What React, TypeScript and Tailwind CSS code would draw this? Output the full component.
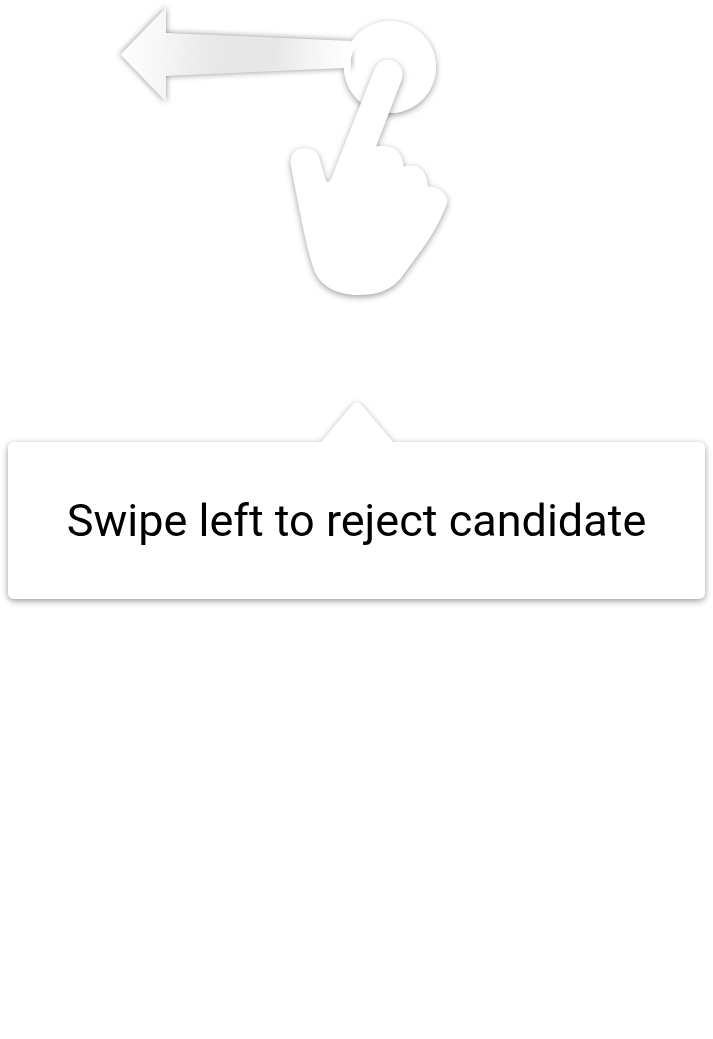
function SwipeGesture() {
  return (
    <svg viewBox="0 0 713 320" className="block w-full max-w-3xl" role="img" aria-label="Hand swiping left">
      <defs>
        <linearGradient id="arrowFill" gradientUnits="userSpaceOnUse" x1="121" y1="0" x2="352" y2="20">
          <stop offset="0" stopColor="#ffffff" />
          <stop offset="0.18" stopColor="#f7f7f7" />
          <stop offset="0.36" stopColor="#ebebeb" />
          <stop offset="0.48" stopColor="#e7e7e7" />
          <stop offset="0.68" stopColor="#e7e7e7" />
          <stop offset="0.82" stopColor="#f3f3f3" />
          <stop offset="0.98" stopColor="#fefefe" />
        </linearGradient>
        <filter id="shade" x="-20%" y="-20%" width="140%" height="140%" colorInterpolationFilters="sRGB">
          <feDropShadow dx="0" dy="2" stdDeviation="3" floodColor="#000" floodOpacity="0.38" />
        </filter>
        <filter id="arrowShade" x="-20%" y="-20%" width="140%" height="140%" colorInterpolationFilters="sRGB">
          <feDropShadow dx="0" dy="0" stdDeviation="3" floodColor="#000" floodOpacity="0.45" />
        </filter>
        <clipPath id="touchInner">
          <circle cx="390" cy="67" r="40" />
        </clipPath>
      </defs>
      <circle cx="390" cy="67" r="46" fill="#fff" filter="url(#shade)" />
      <path
        d="M120.5 54.5 166 7.500V33L352 41Q345 52 344 68L166 76V102Z"
        fill="url(#arrowFill)"
        filter="url(#arrowShade)"
      />
      <circle cx="390" cy="67" r="46" fill="#fff" />
      <g clipPath="url(#touchInner)">
        <path d="M330 43H351V68H330Z" fill="#fff" filter="url(#arrowShade)" />
      </g>
      <path
        d="M290.5 163C290.5 153 296 148 305 148C313 148 318 152 320 160L325 178C326 182.500 329 183 331 179L374.500 69C378 62.500 382 60 388 60C398 60 405 69 402 79L376 146.500C387 145 395 147 399 153C402 157 403 161 403.500 166.500C412 164 419 166 423 171C426 175 427.500 181 428 186.500C437 186 443.500 191 447 198Q448 201 446.500 205C434 236 422 249 401 278C390 291 376 295 359 295C336 295 319 286 313 267C306 246 296 193 290.500 163Z"
        fill="#fff"
        filter="url(#shade)"
      />
    </svg>
  );
}

function Tooltip({ text }: { text: string }) {
  return (
    <section className="mt-20 w-full px-2 drop-shadow-[0_2px_3px_rgba(0,0,0,0.4)]">
      <svg viewBox="0 0 76 42" className="mx-auto block h-[42px] w-[76px]" aria-hidden="true">
        <path d="M2 42 34 4Q38 0 42 4L74 42Z" fill="#fff" />
      </svg>
      <p className="rounded-md bg-white px-4 py-12 text-center text-[45px] leading-[61px]">{text}</p>
    </section>
  );
}

export default function App() {
  return (
    <main className="flex min-h-screen flex-col items-center bg-white font-['Roboto',sans-serif] text-black">
      <SwipeGesture />
      <Tooltip text="Swipe left to reject candidate" />
    </main>
  );
}
